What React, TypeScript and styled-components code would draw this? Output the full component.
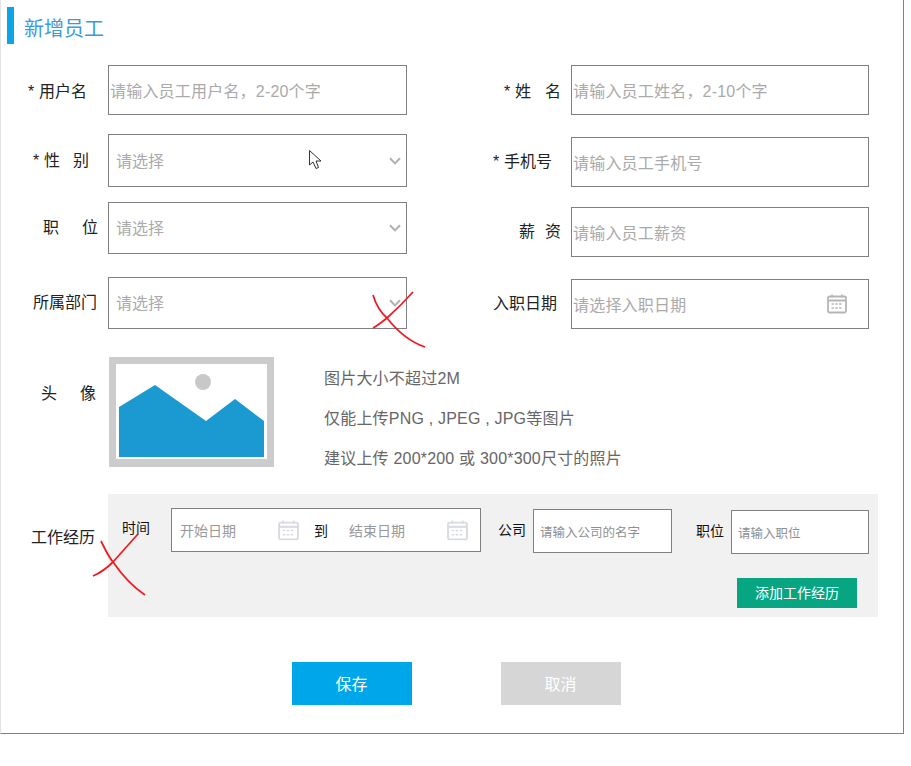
// App.tsx

import React from 'react';
import styled, { createGlobalStyle } from 'styled-components';

const GlobalStyle = createGlobalStyle`
  html, body {
    margin: 0;
    padding: 0;
    background: #fff;
  }
  body {
    font-family: "Liberation Sans", "Noto Sans CJK SC", sans-serif;
    color: #222;
  }
`;

const Page = styled.div`
  position: relative;
  width: 911px;
  height: 766px;
  overflow: hidden;
`;

const Frame = styled.div`
  box-sizing: border-box;
  width: 904px;
  height: 734px;
  padding-top: 7px;
  border-left: 1px solid #e4e4e4;
  border-right: 1px solid #808080;
  border-bottom: 1px solid #808080;
`;

const TitleBar = styled.h1`
  display: flex;
  align-items: center;
  box-sizing: border-box;
  height: 37px;
  margin: 0 0 21px 6px;
  padding: 3px 0 0 10px;
  border-left: 7px solid #0ea5e6;
  font-size: 20px;
  font-weight: 400;
  color: #3a9bdc;
`;

const Columns = styled.div`
  display: flex;
`;

const LeftColumn = styled.div`
  display: flex;
  flex-direction: column;
  width: 406px;
`;

const RightColumn = styled.div`
  display: flex;
  flex-direction: column;
  width: 462px;
`;

const Row = styled.div<{ $height: number; $bottom?: number }>`
  display: flex;
  align-items: center;
  height: ${(p) => p.$height}px;
  margin-bottom: ${(p) => p.$bottom ?? 0}px;
`;

const LabelSlot = styled.div<{ $left: number; $width: number; $top: number }>`
  display: flex;
  flex: none;
  align-items: center;
  box-sizing: border-box;
  width: ${(p) => p.$width}px;
  margin-top: ${(p) => p.$top}px;
  padding-left: ${(p) => p.$left}px;
  font-size: 16px;
  line-height: 22px;
`;

const Star = styled.span`
  width: 11px;
  flex: none;
`;

const Chars = styled.span<{ $gap: number }>`
  display: flex;
  gap: ${(p) => p.$gap}px;
`;

const Box = styled.div<{ $pad: number }>`
  display: flex;
  flex: 1;
  align-items: center;
  justify-content: space-between;
  box-sizing: border-box;
  height: 100%;
  padding: 0 5px 0 ${(p) => p.$pad}px;
  border: 1px solid #808080;
  background: #fff;
`;

const Hint = styled.span`
  font-size: 16px;
  letter-spacing: 0.2px;
  color: #aaa;
  white-space: nowrap;
`;

const SelectHint = styled(Hint)`
  margin-top: -2px;
  letter-spacing: 0;
`;

const BigCalendarSlot = styled.span`
  display: flex;
  margin-right: 16px;
  color: #b5b5b5;
`;

const AvatarRow = styled.div`
  display: flex;
  align-items: flex-start;
  height: 110px;
  margin: 28px 0 27px;
`;

const AvatarNotes = styled.div`
  margin: 2px 0 0 50px;
  font-size: 16px;
  line-height: 40px;
  letter-spacing: 0.2px;
  color: #666;
`;

const WorkRow = styled.div`
  display: flex;
  align-items: flex-start;
`;

const WorkPanel = styled.div`
  box-sizing: border-box;
  width: 770px;
  height: 123px;
  padding: 14px 9px 0 14px;
  background: #f1f1f1;
`;

const WorkFields = styled.div`
  display: flex;
  align-items: flex-start;
`;

const WorkLabel = styled.span<{ $width: number; $top: number; $left?: number }>`
  flex: none;
  width: ${(p) => p.$width}px;
  margin-top: ${(p) => p.$top}px;
  margin-left: ${(p) => p.$left ?? 0}px;
  font-size: 14px;
  line-height: 20px;
  color: #111;
`;

const DateRange = styled.div`
  display: flex;
  align-items: center;
  box-sizing: border-box;
  width: 310px;
  height: 44px;
  padding-left: 8px;
  border: 1px solid #808080;
  background: #fff;
`;

const SmallHint = styled.span`
  font-size: 14px;
  color: #999;
  white-space: nowrap;
`;

const DateText = styled(SmallHint)`
  width: 98px;
`;

const DateIcon = styled.span`
  display: flex;
  color: #d9dbe2;
`;

const To = styled.span`
  width: 35px;
  margin-left: 15px;
  font-size: 14px;
  color: #111;
`;

const WorkInput = styled.div<{ $width: number; $top: number }>`
  display: flex;
  flex: none;
  align-items: center;
  box-sizing: border-box;
  width: ${(p) => p.$width}px;
  height: 44px;
  margin-top: ${(p) => p.$top}px;
  padding-left: 6px;
  border: 1px solid #808080;
  background: #fff;
`;

const InputHint = styled(SmallHint)`
  font-size: 12.5px;
  color: #8f8f8f;
`;

const AddRow = styled.div`
  display: flex;
  justify-content: flex-end;
  margin: 24px 12px 0 0;
`;

const AddButton = styled.button`
  width: 120px;
  height: 30px;
  padding: 0 0 2px;
  border: 0;
  background: #08a583;
  color: #fff;
  font-family: inherit;
  font-size: 14px;
`;

const Actions = styled.div`
  display: flex;
  gap: 89px;
  margin-top: 45px;
  padding-left: 291px;
`;

const ActionButton = styled.button<{ $muted?: boolean }>`
  width: 120px;
  height: 43px;
  padding: 0 1px 2px 0;
  border: 0;
  background: ${(p) => (p.$muted ? '#d6d6d6' : '#00a6ea')};
  color: #fff;
  font-family: inherit;
  font-size: 16px;
`;

const Overlay = styled.svg`
  position: absolute;
  top: 0;
  left: 0;
  pointer-events: none;
`;

const Chevron = () => (
  <svg width="12" height="8" viewBox="0 0 12 8" fill="none">
    <path d="M1 1.2 6 6.4 11 1.2" stroke="#b0b0b0" strokeWidth="2" />
  </svg>
);

const Calendar = ({ size }: { size: number }) => (
  <svg width={size} height={size} viewBox="0 0 20 20" fill="none" stroke="currentColor">
    <rect x="1" y="2.5" width="18" height="16" rx="1.5" strokeWidth="1.8" />
    <path d="M1 6.5H19" strokeWidth="2" />
    <path d="M5 0.5V3.5M15 0.5V3.5" strokeWidth="1.6" />
    <path d="M4.5 10H15.5M4.5 14H15.5" strokeWidth="1.4" strokeDasharray="2.4 1.4" />
  </svg>
);

const AvatarPicture = () => (
  <svg width="165" height="110" viewBox="0 0 165 110">
    <rect width="165" height="110" fill="#cccccc" />
    <rect x="7" y="7" width="151" height="95" fill="#fff" />
    <circle cx="94" cy="25" r="8" fill="#c8c8c8" />
    <path d="M10 50 46 28 97 64 126 42 155 64V100H10Z" fill="#1a9ad0" />
  </svg>
);

interface LabelProps {
  text: string;
  left: number;
  width: number;
  gap?: number;
  top?: number;
  star?: boolean;
}

const Label: React.FC<LabelProps> = ({ text, left, width, gap = 0, top = 0, star }) => (
  <LabelSlot $left={left} $width={width} $top={top}>
    {star && <Star>*</Star>}
    <Chars $gap={gap}>
      {text.split(' ').map((part) => (
        <span key={part}>{part}</span>
      ))}
    </Chars>
  </LabelSlot>
);

const App: React.FC = () => {
  return (
    <Page>
      <GlobalStyle />
      <Frame>
        <TitleBar>新增员工</TitleBar>
        <Columns>
          <LeftColumn>
            <Row $height={50} $bottom={19}>
              <Label star text="用户名" left={27} width={107} top={4} />
              <Box $pad={1}>
                <Hint>{'请输入员工用户名\uFF0C2-20个字'}</Hint>
              </Box>
            </Row>
            <Row $height={53} $bottom={15}>
              <Label star text="性 别" left={32} width={107} gap={13} />
              <Box $pad={7}>
                <SelectHint>请选择</SelectHint>
                <Chevron />
              </Box>
            </Row>
            <Row $height={52} $bottom={23}>
              <Label text="职 位" left={42} width={107} gap={23} />
              <Box $pad={7}>
                <SelectHint>请选择</SelectHint>
                <Chevron />
              </Box>
            </Row>
            <Row $height={52}>
              <Label text="所属部门" left={32} width={107} />
              <Box $pad={7}>
                <SelectHint>请选择</SelectHint>
                <Chevron />
              </Box>
            </Row>
          </LeftColumn>
          <RightColumn>
            <Row $height={50} $bottom={22}>
              <Label star text="姓 名" left={97} width={164} gap={14} top={4} />
              <Box $pad={1}>
                <Hint>{'请输入员工姓名\uFF0C2-10个字'}</Hint>
              </Box>
            </Row>
            <Row $height={50} $bottom={20}>
              <Label star text="手机号" left={86} width={164} />
              <Box $pad={1}>
                <Hint>请输入员工手机号</Hint>
              </Box>
            </Row>
            <Row $height={50} $bottom={22}>
              <Label text="薪 资" left={112} width={164} gap={10} />
              <Box $pad={1}>
                <Hint>请输入员工薪资</Hint>
              </Box>
            </Row>
            <Row $height={50}>
              <Label text="入职日期" left={86} width={164} />
              <Box $pad={1}>
                <Hint>请选择入职日期</Hint>
                <BigCalendarSlot>
                  <Calendar size={20} />
                </BigCalendarSlot>
              </Box>
            </Row>
          </RightColumn>
        </Columns>

        <AvatarRow>
          <Label text="头 像" left={40} width={108} gap={23} top={26} />
          <AvatarPicture />
          <AvatarNotes>
            <div>图片大小不超过2M</div>
            <div>仅能上传PNG , JPEG , JPG等图片</div>
            <div>建议上传 200*200 或 300*300尺寸的照片</div>
          </AvatarNotes>
        </AvatarRow>

        <WorkRow>
          <Label text="工作经历" left={30} width={107} top={33} />
          <WorkPanel>
            <WorkFields>
              <WorkLabel $width={49} $top={10}>
                时间
              </WorkLabel>
              <DateRange>
                <DateText>开始日期</DateText>
                <DateIcon>
                  <Calendar size={21} />
                </DateIcon>
                <To>到</To>
                <DateText>结束日期</DateText>
                <DateIcon>
                  <Calendar size={21} />
                </DateIcon>
              </DateRange>
              <WorkLabel $width={35} $top={12} $left={17}>
                公司
              </WorkLabel>
              <WorkInput $width={139} $top={1}>
                <InputHint>请输入公司的名字</InputHint>
              </WorkInput>
              <WorkLabel $width={35} $top={13} $left={24}>
                职位
              </WorkLabel>
              <WorkInput $width={138} $top={2}>
                <InputHint>请输入职位</InputHint>
              </WorkInput>
            </WorkFields>
            <AddRow>
              <AddButton>添加工作经历</AddButton>
            </AddRow>
          </WorkPanel>
        </WorkRow>

        <Actions>
          <ActionButton>保存</ActionButton>
          <ActionButton $muted>取消</ActionButton>
        </Actions>
      </Frame>

      {/* hand-drawn red marks and the mouse pointer lying over the form */}
      <Overlay width="911" height="766" viewBox="0 0 911 766" fill="none">
        <path d="M373 295C376 305 380 312 387 318 398 332 410 342 425 347" stroke="#f01c24" strokeWidth="1.8" />
        <path d="M413 292C404 302 396 310 387 318 382 322 377 326 373 328" stroke="#f01c24" strokeWidth="1.8" />
        <path d="M101 541C105 549 108 556 113 562 122 575 133 587 145 595" stroke="#f01c24" strokeWidth="1.8" />
        <path d="M138 534C130 543 121 553 113 562 107 568 100 573 93 576" stroke="#f01c24" strokeWidth="1.8" />
        <path d="M309.5 150.5V165L313 162 316 168.5 318.5 167.5 316 161H321Z" fill="#fff" stroke="#333" strokeWidth="1" />
      </Overlay>
    </Page>
  );
};

export default App;
